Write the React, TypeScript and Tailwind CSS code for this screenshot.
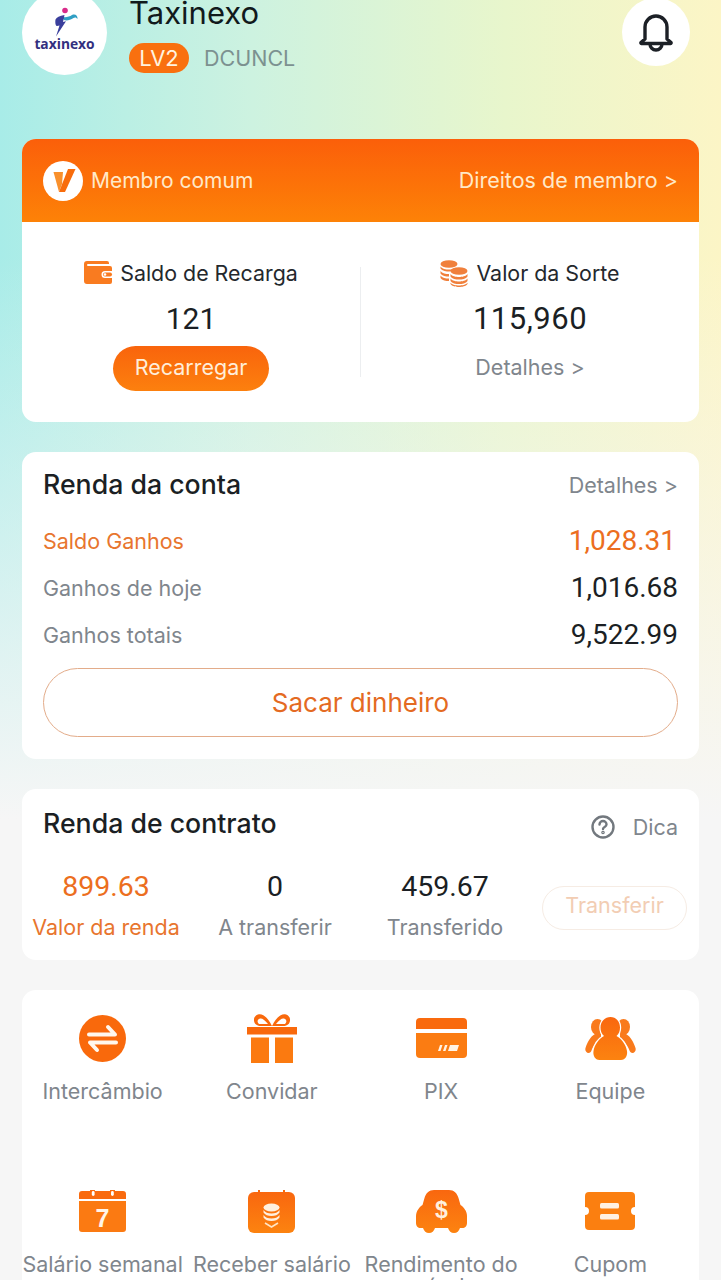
const orange = "url(#og)";
const roboto = "font-['Roboto',sans-serif]";

function Defs() {
  return (
    <svg width="0" height="0" className="absolute">
      <defs>
        <linearGradient id="og" x1="0" y1="0" x2="0" y2="1">
          <stop offset="0" stopColor="#f9670f" />
          <stop offset="1" stopColor="#fc8310" />
        </linearGradient>
      </defs>
    </svg>
  );
}

function Logo() {
  return (
    <div className="flex flex-col items-center -mt-[8px]">
      <svg width="30" height="30" viewBox="0 0 30 30">
        <circle cx="15" cy="3.500" r="2.800" fill="#d92b8a" />
        <path d="M11 9.500c4 1.500 8 .5 11-1.500 3-1.500 6 .5 5.500 4-1-1.500-2.500-2-4-1-3 2-7 3-9.500 2z" fill="#2f9fc4" />
        <path d="M5.500 12.500c1-2 4-4 9-4.500l-1.500 7 3-.8L6 29.500l3.500-11-2.500.5c-1.500.3-2-4-1.500-6.500z" fill="#3a3f9c" />
      </svg>
      <span className="font-['Open_Sans',sans-serif] text-[13.800px] leading-[15px] font-bold text-[#33307f] mt-[-1px]">taxinexo</span>
    </div>
  );
}

function Bell() {
  return (
    <svg width="36" height="40" viewBox="0 0 36 40" fill="none" stroke="#1c2026" strokeWidth="3.400" strokeLinecap="round" strokeLinejoin="round">
      <path d="M7 27V15a11 11 0 0 1 22 0v12l4 3.500a.6.6 0 0 1-.4 1H3.400a.6.6 0 0 1-.4-1z" />
      <path d="M12 32a6 6 0 0 0 12 0" />
    </svg>
  );
}

function VBadge() {
  return (
    <div className="w-10 h-10 rounded-full bg-white flex items-center justify-center">
      <svg width="28" height="26" viewBox="0 0 28 26">
        <path d="M4.500 4h9.500l-1 12-3 8z" fill="#f9902c" />
        <path d="M19 1h7.500L16 24h-6z" fill="#f86c0c" />
      </svg>
    </div>
  );
}

function Wallet() {
  return (
    <svg width="29" height="24" viewBox="0 0 29 24">
      <path d="M3 0h20a2 2 0 0 1 2 2v1H4a1 1 0 0 0 0 2h22a2 2 0 0 1 2 2v3h-7a3.500 3.500 0 0 0 0 7h7v4a2 2 0 0 1-2 2H3a3 3 0 0 1-3-3V3a3 3 0 0 1 3-3z" fill="#f97b20" />
      <rect x="19" y="11.500" width="9" height="4" rx="2" fill="#f97b20" />
      <circle cx="21" cy="13.500" r="1.300" fill="#fff" />
    </svg>
  );
}

function Coins() {
  return (
    <svg width="28" height="27" viewBox="0 0 28 27" fill="#f0803c">
      <ellipse cx="9" cy="4" rx="8.500" ry="3.800" />
      <path d="M.5 6.500C2 9 6 9.500 9 9.500s4-.3 6-1.200V10c-2 1-4 1.500-6 1.500S2 11 .5 8.500z" />
      <path d="M.5 11c1.500 2.500 5.500 3 8.500 3v2.500C6 16.500 2 16 .5 13.500z" />
      <path d="M.5 15.500C2 18 6 18.500 9 18.500V21C6 21 2 20.500.5 18z" />
      <ellipse cx="19" cy="11" rx="8.500" ry="3.800" />
      <path d="M10.500 14C12 16.300 16 17 19 17s7-.7 8.500-3v2.500C26 19 22 19.500 19 19.500S12 19 10.500 16.500z" />
      <path d="M10.500 18.500C12 20.800 16 21.500 19 21.500s7-.7 8.500-3V21C26 23.500 22 24 19 24s-7-.5-8.500-3z" />
      <path d="M10.500 22.800C12 25 16 25.500 19 25.500s7-.5 8.500-2.700V24c-1.500 2.300-5.500 3-8.500 3s-7-.7-8.500-3z" />
    </svg>
  );
}

function Swap() {
  return (
    <svg width="47" height="47" viewBox="0 0 47 47">
      <circle cx="23.500" cy="23.500" r="23.500" fill="#f9690c" />
      <path d="M10 19.500h26L29 12" fill="none" stroke="#fff7ee" strokeWidth="4" strokeLinecap="round" strokeLinejoin="round" />
      <path d="M37 27.500H11L18 35" fill="none" stroke="#fff7ee" strokeWidth="4" strokeLinecap="round" strokeLinejoin="round" />
    </svg>
  );
}

function Gift() {
  return (
    <svg width="50" height="50" viewBox="0 0 50 50">
      <path d="M25 13C21 5 16 0 11 1.500 6 3 6 9 9 11.500c2 1.500 3 1.500 5 1.500zM25 13C29 5 34 0 39 1.500c5 1.500 5 7.500 2 10-2 1.500-3 1.500-5 1.500z" fill="#f9690c" />
      <path d="M21 11C18 7 15 5 13 5.500c-3 .8-3 4-1 5.500zM29 11c3-4 6-6 8-5.500 3 .8 3 4 1 5.500z" fill="#fff" />
      <rect x="0" y="14" width="50" height="7.500" fill="#f9690c" />
      <rect x="4" y="24.500" width="18" height="25.500" fill="#fb7a10" />
      <rect x="28" y="24.500" width="18" height="25.500" fill="#fb7a10" />
    </svg>
  );
}

function Card() {
  return (
    <svg width="51" height="40" viewBox="0 0 51 40">
      <path d="M4 0h43a4 4 0 0 1 4 4v7H0V4a4 4 0 0 1 4-4z" fill="#f96a0e" />
      <path d="M0 15h51v21a4 4 0 0 1-4 4H4a4 4 0 0 1-4-4z" fill="#fb7c12" />
      <path d="M24 27h2.500l-2 6H22zM29 27h2.500l-2 6H27zM34 27h9l-2 6h-9z" fill="#fff3e4" />
    </svg>
  );
}

function Team() {
  return (
    <svg width="51" height="43" viewBox="0 0 51 43">
      <ellipse cx="12.500" cy="10" rx="6.500" ry="8" fill="#f97a1c" />
      <ellipse cx="38.500" cy="10" rx="6.500" ry="8" fill="#f97a1c" />
      <path d="M10 17h6v4C12 24 8 29 6.500 33.500 6 35 5 36 3.500 36 1.300 36-.3 33.500.5 31 2.500 25 5 20 10 17z" fill="#f97a1c" />
      <path d="M41 17h-6v4c4 3 8 8 9.500 12.500.5 1.500 1.500 2.500 3 2.500 2.200 0 3.800-2.500 3-5-2-6-4.500-11-9.500-14z" fill="#f97a1c" />
      <path d="M25.500 0c5.500 0 9.500 4.500 9.500 10.500 0 3.500-1 6.500-3.500 8.500 5.500 3 9.500 9 10.500 15 .7 4.500-1.500 9-6 9H14.500c-4.500 0-6.700-4.500-6-9 1-6 5-12 10.500-15-2.500-2-3.500-5-3.500-8.500C15.500 4.500 20 0 25.500 0z" fill={orange} stroke="#fff" strokeWidth="2.400" paintOrder="stroke" />
    </svg>
  );
}

function Calendar() {
  return (
    <svg width="47" height="42" viewBox="0 0 47 42">
      <path d="M3 1h8a2.500 2.500 0 0 1 5 0h15a2.500 2.500 0 0 1 5 0h8a3 3 0 0 1 3 3v5H0V4a3 3 0 0 1 3-3z" fill="#f96a0e" />
      <rect x="12.800" y="1" width="2.800" height="5" rx="1.400" fill="#fff" />
      <rect x="32" y="1" width="2.800" height="5" rx="1.400" fill="#fff" />
      <path d="M0 11h47v28a3 3 0 0 1-3 3H3a3 3 0 0 1-3-3z" fill="#fb7a12" />
      <text x="23.500" y="37" textAnchor="middle" fontFamily="'Liberation Sans',sans-serif" fontWeight="700" fontSize="25" fill="#fff5ea">7</text>
    </svg>
  );
}

function Salary() {
  return (
    <svg width="47" height="43" viewBox="0 0 47 43">
      <rect x="10" y="0" width="2" height="3" fill="#f96a0e" />
      <rect x="35" y="0" width="2" height="3" fill="#f96a0e" />
      <rect x="0" y="2" width="47" height="41" rx="6" fill={orange} />
      <ellipse cx="23.500" cy="17.500" rx="8" ry="4" fill="#fff0df" />
      <path d="M15.500 20c1.500 2.500 4.500 3.500 8 3.500s6.500-1 8-3.500v2.500c-1.500 2.500-4.500 3.500-8 3.500s-6.500-1-8-3.500zM15.500 25c1.500 2.500 4.500 3.500 8 3.500s6.500-1 8-3.500v2.500c-1.500 2.500-4.500 3.500-8 3.500s-6.500-1-8-3.500z" fill="#fff0df" />
      <path d="M17 33l6.500 4 6.500-4" fill="none" stroke="#ffe4c4" strokeWidth="1.600" />
    </svg>
  );
}

function Car() {
  return (
    <svg width="51" height="43" viewBox="0 0 51 43">
      <path d="M18 0h15c5 0 8 3 9.500 8l2 7c3 2 6.500 6 6.500 11v7c0 3-2 5-4.500 5H44c-1 3-3 5-6 5s-5-2-6-5H19c-1 3-3 5-6 5s-5-2-6-5H4.500C2 38 0 36 0 33v-7c0-5 3.500-9 6.500-11l2-7C10 3 13 0 18 0z" fill={orange} />
      <text x="25.500" y="28" textAnchor="middle" fontFamily="'Liberation Sans',sans-serif" fontWeight="700" fontSize="23" fill="#fff0df">$</text>
    </svg>
  );
}

function Coupon() {
  return (
    <svg width="50" height="38" viewBox="0 0 50 38">
      <path d="M4 0h42a4 4 0 0 1 4 4v11a4 4 0 0 0 0 8v11a4 4 0 0 1-4 4H4a4 4 0 0 1-4-4V23a4 4 0 0 0 0-8V4a4 4 0 0 1 4-4z" fill="#fb7f10" />
      <rect x="15" y="11" width="19" height="5.500" rx="1.500" fill="#fff1e2" />
      <rect x="15" y="22" width="19" height="5.500" rx="1.500" fill="#fff1e2" />
    </svg>
  );
}

const menuTop = [
  { icon: <Swap />, label: "Intercâmbio" },
  { icon: <Gift />, label: "Convidar" },
  { icon: <Card />, label: "PIX" },
  { icon: <Team />, label: "Equipe" },
];
const menuBottom = [
  { icon: <Calendar />, label: "Salário semanal" },
  { icon: <Salary />, label: "Receber salário" },
  { icon: <Car />, label: "Rendimento do veículo" },
  { icon: <Coupon />, label: "Cupom" },
];

function Tile({ icon, label }: { icon: React.ReactNode; label: string }) {
  return (
    <div className="flex flex-col items-center">
      <div className="h-[52px] flex items-center justify-center">{icon}</div>
      <div className="mt-[16px] text-[21.500px] leading-[22px] text-[#7f868d] text-center">{label}</div>
    </div>
  );
}

export default function App() {
  return (
    <div className="relative w-full h-[1280px] overflow-hidden font-['Inter',sans-serif] bg-[linear-gradient(to_bottom,rgba(245,245,245,0)_0%,rgba(245,245,245,0)_20%,#f6f6f6_64%),linear-gradient(to_right,#a8ece8_0%,#cdf2e0_35%,#e8f6cc_70%,#fcf5c6_100%)]">
      <Defs />
      <header className="flex items-start px-[22px] -mt-[10px] h-[149px]">
        <div className="w-[85px] h-[85px] rounded-full bg-white flex items-center justify-center shrink-0">
          <Logo />
        </div>
        <div className="ml-[22px] flex-1">
          <div className="text-[31px] leading-[26px] text-[#111a1c] mt-[10px]">Taxinexo</div>
          <div className="flex items-center mt-[16px]">
            <span className="w-[60px] h-[30px] rounded-full bg-[#f9700f] text-[#fff3df] text-[22px] leading-[30px] text-center">LV2</span>
            <span className="ml-[15px] text-[21.500px] text-[#7c9190]">DCUNCL</span>
          </div>
        </div>
        <div className="w-[68px] h-[68px] rounded-full bg-white flex items-center justify-center mt-[8px] mr-[9px] shrink-0">
          <Bell />
        </div>
      </header>

      <main className="px-[22px] flex flex-col gap-[30px]">
        <section className="bg-white rounded-[14px] h-[283px] overflow-hidden">
          <div className="h-[83px] bg-[linear-gradient(to_bottom,#fb5f0a,#fd8207)] flex items-center justify-between pl-[21px] pr-[21px]">
            <div className="flex items-center gap-[8px]">
              <VBadge />
              <span className="text-[21px] text-[#ffe9c8]">Membro comum</span>
            </div>
            <span className="text-[21.500px] text-[#ffe9c8]">Direitos de membro &gt;</span>
          </div>
          <div className="flex h-[200px] items-start">
            <div className="flex-1 flex flex-col items-center pt-[36px]">
              <div className="flex items-center gap-[7px] h-[30px]">
                <Wallet />
                <span className="text-[21.400px] text-[#24282d]">Saldo de Recarga</span>
              </div>
              <div className={`${roboto} text-[30px] leading-[36px] text-[#1b1f24] mt-[13px]`}>121</div>
              <div className="mt-[9px] w-[156px] h-[45px] rounded-full bg-[linear-gradient(to_bottom,#f9640c,#fc800e)] text-[#ffeeda] text-[21.500px] leading-[43px] text-center">Recarregar</div>
            </div>
            <div className="w-px h-[110px] bg-[#eceef0] mt-[45px]" />
            <div className="flex-1 flex flex-col items-center pt-[36px]">
              <div className="flex items-center gap-[8px] h-[30px]">
                <Coins />
                <span className="text-[21.400px] text-[#24282d]">Valor da Sorte</span>
              </div>
              <div className={`${roboto} text-[31px] leading-[36px] tracking-[0.5px] text-[#1b1f24] mt-[13px]`}>115,960</div>
              <div className="mt-[16px] text-[21.500px] leading-[28px] text-[#7f868d]">Detalhes &gt;</div>
            </div>
          </div>
        </section>

        <section className="bg-white rounded-[14px] h-[307px] px-[21px]">
          <div className="flex items-center justify-between pt-[4px] h-[62px]">
            <span className="text-[26.700px] font-medium text-[#1b1f24] -mt-[2px]">Renda da conta</span>
            <span className="text-[21.500px] text-[#7f868d]">Detalhes &gt;</span>
          </div>
          <div className="flex items-center justify-between h-[47px] mt-[4px]">
            <span className="text-[21.500px] text-[#e8752e]">Saldo Ganhos</span>
            <span className={`${roboto} text-[28px] text-[#ec6e20] pr-[2px] -mt-[2px]`}>1,028.31</span>
          </div>
          <div className="flex items-center justify-between h-[47px]">
            <span className="text-[21.500px] text-[#7f868d]">Ganhos de hoje</span>
            <span className={`${roboto} text-[28px] text-[#1b1f24] -mt-[2px]`}>1,016.68</span>
          </div>
          <div className="flex items-center justify-between h-[47px]">
            <span className="text-[21.500px] text-[#7f868d]">Ganhos totais</span>
            <span className={`${roboto} text-[28px] text-[#1b1f24] -mt-[2px]`}>9,522.99</span>
          </div>
          <div className="mt-[9px] h-[69px] rounded-full border border-[#e3ac8a] text-[#e46a22] text-[26px] leading-[67px] text-center">Sacar dinheiro</div>
        </section>

        <section className="bg-white rounded-[14px] h-[171px]">
          <div className="flex items-center justify-between pl-[21px] pr-[21px] h-[70px]">
            <span className="text-[26.700px] font-medium text-[#1b1f24] -mt-[2px]">Renda de contrato</span>
            <div className="flex items-center gap-[18px] mt-[6px]">
              <svg width="24" height="24" viewBox="0 0 24 24" fill="none" stroke="#72787e" strokeWidth="2.400" strokeLinecap="round">
                <circle cx="12" cy="12" r="10.500" />
                <path d="M8.500 9.500a3.500 3.500 0 0 1 7 0c0 2.500-3.500 2.500-3.500 4.500" />
                <circle cx="12" cy="17.500" r=".6" />
              </svg>
              <span className="text-[21.500px] text-[#7f868d]">Dica</span>
            </div>
          </div>
          <div className="flex items-start mt-[12px]">
            <div className="w-[168px] flex flex-col items-center">
              <div className={`${roboto} text-[28.500px] leading-[32px] text-[#ec6e20]`}>899.63</div>
              <div className="text-[21.500px] leading-[30px] text-[#e8752e] mt-[9px]">Valor da renda</div>
            </div>
            <div className="w-[170px] flex flex-col items-center">
              <div className={`${roboto} text-[28.500px] leading-[32px] text-[#1b1f24]`}>0</div>
              <div className="text-[21.500px] leading-[30px] text-[#7f868d] mt-[9px]">A transferir</div>
            </div>
            <div className="w-[170px] flex flex-col items-center">
              <div className={`${roboto} text-[28.500px] leading-[32px] text-[#1b1f24]`}>459.67</div>
              <div className="text-[21.500px] leading-[30px] text-[#7f868d] mt-[9px]">Transferido</div>
            </div>
            <div className="ml-[12px] mt-[15px] w-[145px] h-[44px] rounded-full border border-[#f6ece4] text-[#f2cdb3] text-[21.500px] leading-[37px] text-center">Transferir</div>
          </div>
        </section>

        <section className="bg-white rounded-[14px] h-[400px] pt-[22px]">
          <div className="grid grid-cols-4 -ml-[4px] mr-[4px]">
            {menuTop.map((m) => (
              <Tile key={m.label} icon={m.icon} label={m.label} />
            ))}
          </div>
          <div className="grid grid-cols-4 -ml-[4px] mr-[4px] mt-[83px]">
            {menuBottom.map((m) => (
              <Tile key={m.label} icon={m.icon} label={m.label} />
            ))}
          </div>
        </section>
      </main>
    </div>
  );
}
